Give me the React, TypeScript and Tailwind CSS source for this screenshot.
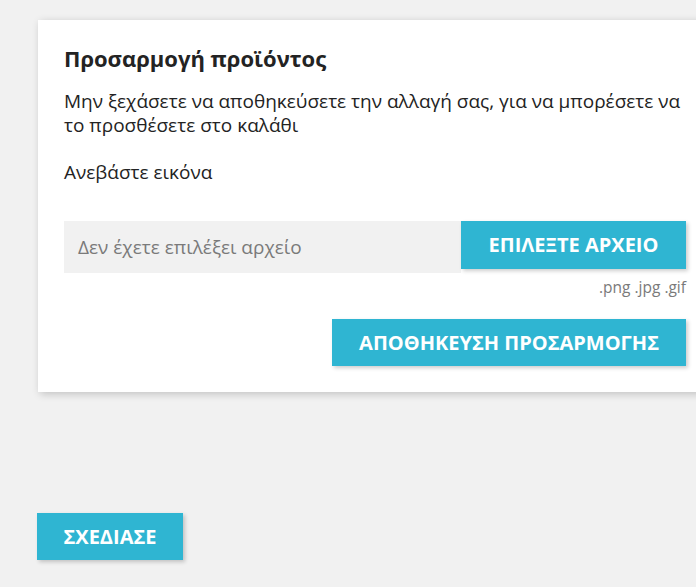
import React from 'react';

const font = { fontFamily: '"Open Sans", "Noto Sans", sans-serif' };

export default function App() {
  return (
    <div
      className="w-[696px] h-[587px] overflow-hidden bg-[#f1f1f1] pt-[20px] pl-[38px]"
      style={font}
    >
      {/* Customization card */}
      <div className="w-[674px] bg-white shadow-[2px_2px_8px_0_rgba(0,0,0,0.2)] px-[26px] pt-[23px] pb-[26px]">
        <h2 className="text-[22px] leading-[30px] font-bold text-[#232323]">
          Προσαρμογή προϊόντος
        </h2>
        <p className="mt-[16px] text-[19px] leading-[24px] text-[#232323]">
          Μην ξεχάσετε να αποθηκεύσετε την αλλαγή σας, για να μπορέσετε να το
          προσθέσετε στο καλάθι
        </p>
        <p className="mt-[23px] text-[19px] leading-[24px] text-[#232323]">Ανεβάστε εικόνα</p>

        <div className="mt-[37px] flex items-start">
          <div className="flex-1 h-[52px] bg-[#f1f1f1] flex items-center pl-[14px] text-[19px] text-[#7a7a7a]">
            Δεν έχετε επιλέξει αρχείο
          </div>
          <button className="w-[225px] h-[48px] bg-[#2fb5d2] text-white font-bold text-[20px] uppercase shadow-[2px_2px_4px_0_rgba(0,0,0,0.2)]">
            ΕΠΙΛΕΞΤΕ ΑΡΧΕΙΟ
          </button>
        </div>
        <div className="mt-[4px] text-right text-[15.5px] leading-[20px] text-[#7a7a7a]">
          .png .jpg .gif
        </div>

        <div className="mt-[22px] flex justify-end">
          <button className="h-[47px] px-[27px] bg-[#2fb5d2] text-white font-bold text-[20px] uppercase shadow-[2px_2px_4px_0_rgba(0,0,0,0.2)]">
            ΑΠΟΘΗΚΕΥΣΗ ΠΡΟΣΑΡΜΟΓΗΣ
          </button>
        </div>
      </div>

      <div className="mt-[121px] -ml-px">
        <button className="h-[47px] w-[146px] bg-[#2fb5d2] text-white font-bold text-[20px] uppercase shadow-[2px_2px_4px_0_rgba(0,0,0,0.2)]">
          ΣΧΕΔΙΑΣΕ
        </button>
      </div>
    </div>
  );
}
